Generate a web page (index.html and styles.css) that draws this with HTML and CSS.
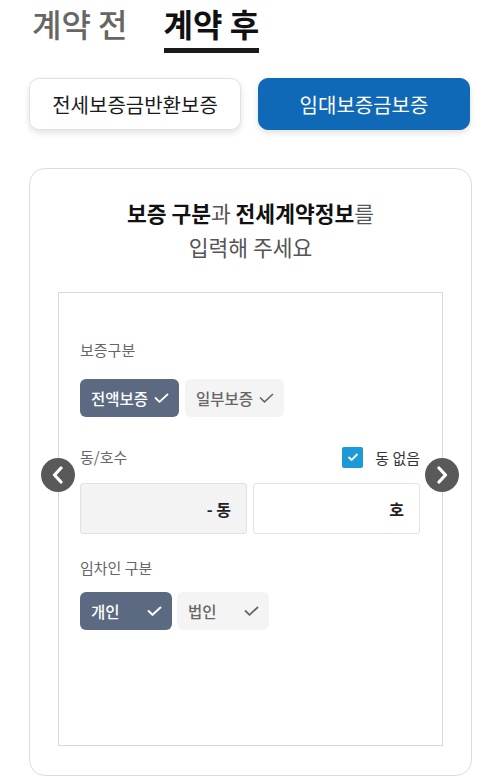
FILE: index.html
```html
<!DOCTYPE html>
<html>
<head>
  <title>보증 신청</title>
  <link rel="stylesheet" href="styles.css">
</head>
<body>
  <div class="tabs">
    <span class="tab">계약 전</span>
    <span class="tab tab-active">계약 후</span>
  </div>

  <div class="product-buttons">
    <button class="product-button">전세보증금반환보증</button>
    <button class="product-button product-button-active">임대보증금보증</button>
  </div>

  <div class="card">
    <h2 class="card-title"><b>보증 구분</b>과 <b>전세계약정보</b>를<br>입력해 주세요</h2>

    <div class="form-box">
      <div class="field-label">보증구분</div>
      <div class="chips">
        <span class="chip chip-wide chip-selected">전액보증
          <svg width="15" height="10" viewBox="0 0 15 10"><path d="M1 4.5 L5.5 8.8 L14 1" fill="none" stroke="currentColor" stroke-width="1.8"/></svg>
        </span>
        <span class="chip chip-wide">일부보증
          <svg width="15" height="10" viewBox="0 0 15 10"><path d="M1 4.5 L5.5 8.8 L14 1" fill="none" stroke="currentColor" stroke-width="1.6"/></svg>
        </span>
      </div>

      <div class="field-row">
        <div class="field-label">동/호수</div>
        <label class="no-dong">
          <span class="checkbox">
            <svg width="12" height="10" viewBox="0 0 12 10"><path d="M1.5 5 L4.6 8 L10.5 2" fill="none" stroke="#fff" stroke-width="1.8"/></svg>
          </span>
          동 없음
        </label>
      </div>
      <div class="inputs">
        <div class="text-input text-input-disabled">- 동</div>
        <div class="text-input">호</div>
      </div>

      <div class="field-label field-label-gap">임차인 구분</div>
      <div class="chips chips-tight">
        <span class="chip chip-short chip-selected">개인
          <svg width="15" height="10" viewBox="0 0 15 10"><path d="M1 4.5 L5.5 8.8 L14 1" fill="none" stroke="currentColor" stroke-width="2"/></svg>
        </span>
        <span class="chip chip-short">법인
          <svg width="15" height="10" viewBox="0 0 15 10"><path d="M1 4.5 L5.5 8.8 L14 1" fill="none" stroke="currentColor" stroke-width="1.8"/></svg>
        </span>
      </div>
    </div>

    <button class="arrow arrow-prev" aria-label="이전">
      <svg width="14" height="18" viewBox="0 0 14 18"><path d="M10 2 L3.5 9 L10 16" fill="none" stroke="#fff" stroke-width="3.2" stroke-linecap="round" stroke-linejoin="round"/></svg>
    </button>
    <button class="arrow arrow-next" aria-label="다음">
      <svg width="14" height="18" viewBox="0 0 14 18"><path d="M4 2 L10.5 9 L4 16" fill="none" stroke="#fff" stroke-width="3.2" stroke-linecap="round" stroke-linejoin="round"/></svg>
    </button>
  </div>
</body>
</html>
```

FILE: styles.css
```css
body {
  font-family: "Noto Sans CJK KR", "Noto Sans", sans-serif;
  margin: 0;
  color: #222;
  background-color: #fff;
}

.tabs {
  display: flex;
  gap: 36px;
  padding-left: 32px;
}

.tab {
  font-size: 32px;
  line-height: 46px;
  color: #666;
  font-weight: 500;
  padding-bottom: 2px;
  border-bottom: 5px solid transparent;
}

.tab-active {
  color: #111;
  font-weight: 700;
  border-bottom-color: #1a1a1a;
}

.product-buttons {
  display: grid;
  grid-template-columns: 1fr 1fr;
  gap: 17px;
  padding: 0 30px 0 29px;
  margin-top: 25px;
}

.product-button {
  height: 52px;
  border: 1px solid #e2e2e2;
  border-radius: 10px;
  background-color: #fff;
  color: #1a1a1a;
  font-family: inherit;
  font-size: 20px;
  box-shadow: 0 3px 6px rgba(0, 0, 0, 0.12);
}

.product-button-active {
  background-color: #1069b6;
  border-color: #1069b6;
  color: #fff;
}

.card {
  position: relative;
  margin: 38px 28px 0 29px;
  border: 1px solid #dcdcdc;
  border-radius: 16px;
  padding: 27px 28px 29px 28px;
  height: 608px;
  box-sizing: border-box;
}

.card-title {
  margin: 0;
  text-align: center;
  font-size: 21.5px;
  line-height: 34px;
  font-weight: 400;
  color: #555;
}

.card-title b {
  color: #111;
  font-weight: 700;
}

.form-box {
  margin-top: 28px;
  border: 1px solid #d8d8d8;
  height: 454px;
  box-sizing: border-box;
  padding: 47px 22px 0 21px;
}

.field-label {
  font-size: 15px;
  line-height: 20px;
  color: #666;
}

.chips {
  display: flex;
  gap: 6px;
  margin-top: 19px;
}

.chips-tight {
  gap: 5px;
  margin-top: 14px;
}

.chip {
  display: flex;
  align-items: center;
  justify-content: space-between;
  height: 38px;
  box-sizing: border-box;
  padding: 0 10px 0 11px;
  border-radius: 6px;
  background-color: #f4f4f4;
  color: #666;
  font-size: 15.5px;
  font-weight: 500;
}

.chip-wide {
  width: 99px;
}

.chip-short {
  width: 92px;
}

.chip-selected {
  background-color: #5b6a80;
  color: #fff;
}

.field-row {
  display: flex;
  justify-content: space-between;
  align-items: center;
  margin-top: 29px;
  height: 22px;
}

.no-dong {
  display: flex;
  align-items: center;
  gap: 12px;
  font-size: 15px;
  color: #333;
}

.checkbox {
  display: flex;
  align-items: center;
  justify-content: center;
  width: 21px;
  height: 21px;
  border-radius: 2px;
  background-color: #1b9ad7;
}

.inputs {
  display: grid;
  grid-template-columns: 1fr 1fr;
  gap: 6px;
  margin-top: 15px;
}

.text-input {
  height: 51px;
  box-sizing: border-box;
  border: 1px solid #e2e2e2;
  border-radius: 3px;
  padding-right: 15px;
  display: flex;
  align-items: center;
  justify-content: flex-end;
  font-size: 16px;
  font-weight: 700;
  color: #222;
}

.text-input-disabled {
  background-color: #f3f3f3;
}

.field-label-gap {
  margin-top: 24px;
}

.arrow {
  position: absolute;
  top: 289px;
  width: 34px;
  height: 34px;
  border: none;
  border-radius: 50%;
  background-color: #595959;
  padding: 0;
  display: flex;
  align-items: center;
  justify-content: center;
}

.arrow-prev {
  left: 11px;
}

.arrow-next {
  right: 12px;
}
```
